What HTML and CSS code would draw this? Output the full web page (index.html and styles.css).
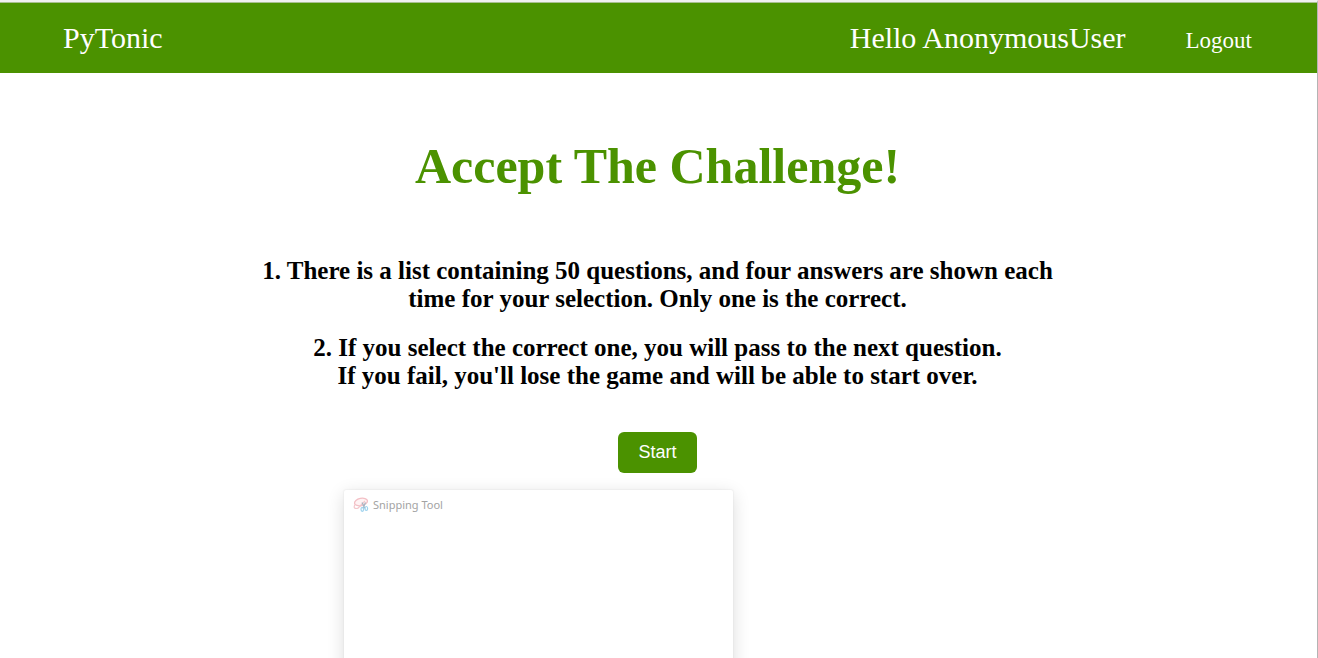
FILE: index.html
```html
<!DOCTYPE html>
<html lang="en">
<head>
<meta charset="utf-8">
<title>PyTonic</title>
<meta name="viewport" content="width=device-width, initial-scale=1">
<link rel="stylesheet" href="styles.css">
</head>
<body>
<div class="page">
  <header class="navbar">
    <a class="brand" href="#">PyTonic</a>
    <nav class="account">
      <span class="greeting">Hello AnonymousUser</span>
      <a class="logout" href="#">Logout</a>
    </nav>
  </header>
  <main class="content">
    <h1 class="title">Accept The Challenge!</h1>
    <p class="rule">1. There is a list containing 50 questions, and four answers are shown each<br>time for your selection. Only one is the correct.</p>
    <p class="rule">2. If you select the correct one, you will pass to the next question.<br>If you fail, you'll lose the game and will be able to start over.</p>
    <button class="start" type="button">Start</button>
  </main>
  <section class="snip" aria-label="Snipping Tool">
    <div class="snip-bar">
      <svg class="snip-icon" viewBox="0 0 16 16" aria-hidden="true">
        <ellipse cx="8" cy="5" rx="6.6" ry="3.6" transform="rotate(-12 8 5)" fill="#fff3f4" stroke="#f3bfc5" stroke-width="1.3"/>
        <path d="M2 7.5C0 11 2 12 5 11.2L12 4" fill="none" stroke="#f3c6cb" stroke-width="1.2"/>
        <path d="M9 5.5l3 6M12.5 5.5l-2.500 6" stroke="#a5b4c2" stroke-width="1.2"/>
        <ellipse cx="9.3" cy="12.3" rx="1.3" ry="2" fill="none" stroke="#9fd3ee" stroke-width="1.2"/>
        <ellipse cx="13.3" cy="11.5" rx="1.3" ry="2" fill="none" stroke="#9fd3ee" stroke-width="1.2"/>
      </svg>
      <span>Snipping Tool</span>
    </div>
  </section>
</div>
</body>
</html>
```
FILE: styles.css
```css
* {
  box-sizing: border-box;
}

body {
  margin: 0;
  background: #fff;
  color: #000;
  font-family: "Liberation Serif", "Times New Roman", serif;
}

.page {
  display: flex;
  flex-direction: column;
  height: 100vh;
  overflow: hidden;
  border-top: 2px solid #f0f0f0;
  border-right: 1px solid #b4b4b4;
}

.navbar {
  display: flex;
  justify-content: space-between;
  align-items: baseline;
  flex: none;
  padding: 18px 65px 15px 63px;
  border-top: 1px solid #a9bf91;
  background: #4b9200;
  color: #fff;
  font-size: 30px;
  line-height: 34px;
}

.brand,
.logout {
  color: inherit;
  text-decoration: none;
}

.account {
  display: flex;
  align-items: baseline;
  gap: 60px;
}

.logout {
  font-size: 23px;
}

.content {
  display: flex;
  flex-direction: column;
  align-items: center;
  flex: none;
  padding: 65px 26px 17px 24px;
  text-align: center;
}

.title {
  margin: 0 0 63px;
  color: #4b9200;
  font-size: 50px;
  line-height: 56px;
}

.rule {
  margin: 0 0 21px;
  font-size: 25px;
  font-weight: bold;
  line-height: 28px;
}

.start {
  margin-top: 21px;
  padding: 10px 20px;
  border: 0;
  border-radius: 6px;
  background: #4b9200;
  color: #fff;
  font-family: "Liberation Sans", Arial, sans-serif;
  font-size: 18px;
  line-height: 21px;
}

.snip {
  flex: 1 0 200px;
  width: 389px;
  margin-left: 344px;
  border-radius: 2px 2px 0 0;
  background: #fff;
  box-shadow: 0 0 2px #dcdcdc, 0 4px 18px rgba(0, 0, 0, 0.14);
}

.snip-bar {
  display: flex;
  align-items: center;
  gap: 4px;
  padding: 7px 9px;
  color: #a3a3a3;
  font-family: "Noto Sans", sans-serif;
  font-size: 11px;
  line-height: 16px;
}

.snip-icon {
  width: 16px;
  height: 16px;
}
```
